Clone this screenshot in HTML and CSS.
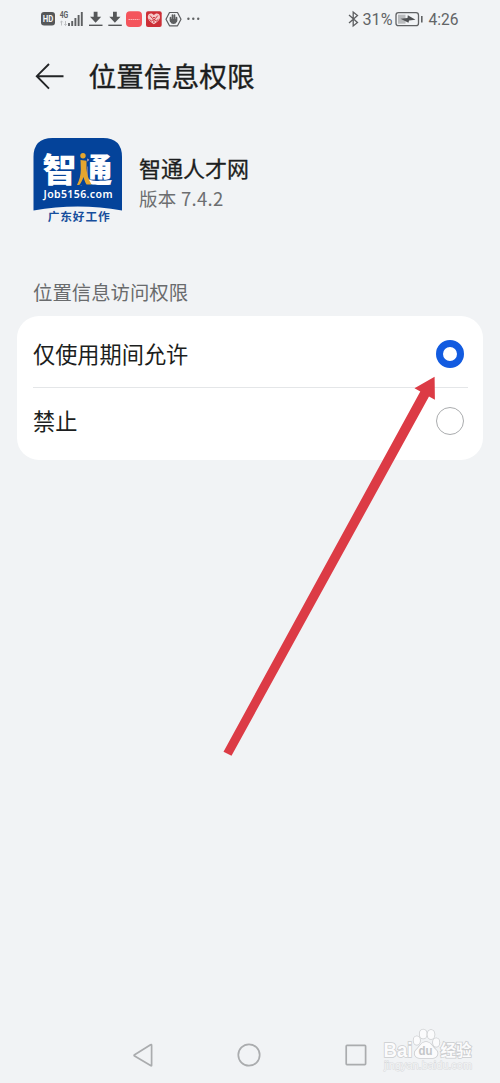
FILE: index.html
```html
<!DOCTYPE html>
<html lang="zh-CN">
<head>
<meta charset="utf-8">
<title>位置信息权限</title>
<link rel="stylesheet" href="styles.css">
</head>
<body>
<div class="screen">
  <header class="status">
    <svg class="status-left" width="162" height="20" viewBox="40 9 162 20">
      <rect x="41" y="12" width="14" height="13.500" rx="3" fill="#555759"/>
      <text class="hd" x="42.700" y="22.300" textLength="10.600" lengthAdjust="spacingAndGlyphs">HD</text>
      <text class="net" x="59.700" y="18.300" textLength="8.600" lengthAdjust="spacingAndGlyphs">4G</text>
      <path d="M61.500 21v4.500M60.200 22.300l1.300-1.300 1.300 1.300M65.500 21v4.500M64.200 24.200l1.300 1.300 1.300-1.300" fill="none" stroke="#b9bbbd" stroke-width=".9"/>
      <path d="M69 23v3M72.200 21v5M75.400 18v8M78.600 15v11M81.800 12v14" stroke="#5e6062" stroke-width="1.900"/>
      <g id="dl" fill="#555759">
        <path d="M93.700 11.700h3.800v5h3.700L95.600 22.700 90 16.700h3.700z"/>
        <path d="M89 24.600h13.500v1.400H89z"/>
      </g>
      <use href="#dl" x="19.300"/>
      <rect x="126" y="11.300" width="16" height="15.700" rx="4" fill="#f4545c"/>
      <path d="M128.500 19.500h11" stroke="#fbb0b3" stroke-dasharray="1.500 .5" stroke-width="1"/>
      <rect x="146" y="11.300" width="15.700" height="15.700" rx="2" fill="#cc2f37"/>
      <path d="M153.900 24.200c-3-2-6.100-4.200-6.100-7.200 0-3.700 4.300-4.500 6.100-1.700 1.800-2.800 6.100-2 6.100 1.700 0 3-3.100 5.200-6.100 7.200z" fill="#f5c9c9"/>
      <path d="M150 15.500l2.500 3 1.400-1.500 1.400 1.500 2.500-3M149.500 19.500l2 1.500 2.400-2 2.400 2 2-1.500M153.900 20v3" fill="none" stroke="#cc2f37" stroke-width="1"/>
      <path d="M169.500 12.500h8l3.500 6.700-3.500 6.600h-8l-3.500-6.600z" fill="none" stroke="#5c5e60" stroke-width="1.200" stroke-linejoin="round"/>
      <path d="M170.500 17.700v3M172.500 15v5M174.500 15v5M176.500 17.700v3" stroke="#5c5e60" stroke-width="1.700" stroke-linecap="round"/>
      <path d="M170 19h7v2.500q-1 2.500-3.500 2.500T170 21.500z" fill="#5c5e60"/>
      <g fill="#606264"><circle cx="188.400" cy="18.700" r="1.200"/><circle cx="193.300" cy="18.700" r="1.200"/><circle cx="198.200" cy="18.700" r="1.200"/></g>
    </svg>
    <svg class="status-right" width="116" height="20" viewBox="346 9 116 20">
      <path d="M349 15l8.500 7.500-4.300 3.500V12l4.300 3.500L349 23" fill="none" stroke="#5c5e60" stroke-width="1.300"/>
      <text class="stat" x="362.500" y="25" textLength="30" lengthAdjust="spacingAndGlyphs">31%</text>
      <rect x="396" y="12.700" width="22.500" height="13" rx="2.500" fill="none" stroke="#606264" stroke-width="1.300"/>
      <rect x="398" y="14.700" width="7.500" height="9" fill="#b9bbbd"/>
      <path d="M421.800 16v6.500" stroke="#606264" stroke-width="1.600"/>
      <path d="M400.500 18.700l7-.8.300-2.600 7.700 4.400-6.500.7-.5 2.300z" fill="#505254"/>
      <text class="stat" x="428.500" y="25" textLength="30" lengthAdjust="spacingAndGlyphs">4:26</text>
    </svg>
  </header>

  <div class="titlebar">
    <svg width="30" height="28" viewBox="35 62 30 28"><path d="M63.500 76.200H37M49 64L36.800 76.200 49 88.600" fill="none" stroke="#222426" stroke-width="1.900"/></svg>
    <h1 class="title">位置信息权限</h1>
  </div>

  <section class="app">
    <svg class="app-icon" width="90" height="90" viewBox="33 137 90 90">
      <path d="M33.500 210.500V157q0-19 19-19H103q19 0 19 19v53.500Q78 202.500 33.500 210.500z" fill="#04439a"/>
      <text class="logo" x="42.500" y="182.300" textLength="34" lengthAdjust="spacingAndGlyphs">智</text>
      <text class="logo" x="77.500" y="182.300" textLength="35" lengthAdjust="spacingAndGlyphs">通</text>
      <path d="M77 151h10.500v28.500l-1.500 6h-9z" fill="#04439a"/>
      <circle cx="83" cy="155.800" r="2.700" fill="#e5a62f"/>
      <path d="M80.500 160l6 .7v7.500c.3 5.500 1.800 11 5 16.300h-5c-1.500-2.500-2.300-5-3-7.500-1.200 3.500-2.500 6-4.300 8H77c2.500-5 3.800-9.800 3.800-15.500z" fill="#e5a62f"/>
      <text class="site" x="43.500" y="198" textLength="69" lengthAdjust="spacing">Job5156.com</text>
      <text class="slogan" x="47.700" y="221" textLength="62" lengthAdjust="spacing">广东好工作</text>
    </svg>
    <div class="app-text">
      <div class="app-name">智通人才网</div>
      <div class="version">版本 7.4.2</div>
    </div>
  </section>

  <h2 class="label">位置信息访问权限</h2>
  <div class="card">
    <div class="row"><span>仅使用期间允许</span><i class="radio radio-on"></i></div>
    <div class="row row-last"><span>禁止</span><i class="radio"></i></div>
  </div>

  <svg class="arrow" width="220" height="385" viewBox="220 373 220 385"><path d="M223.500 751.700L420.300 391.400 414.500 388.300 434.600 376.700 434.900 399.800 429 396.500 231.500 755.700z" fill="#dc3b45"/></svg>

  <nav class="nav">
    <svg width="21" height="24" viewBox="132 1043 21 24"><path d="M151.600 1045.200v20q0 1-1 .4l-16-9.600q-1-.6 0-1.200l16-10q1-.6 1 .4z" fill="none" stroke="#aaacae" stroke-width="1.700"/></svg>
    <svg width="24" height="24"><circle cx="12" cy="12" r="10.700" fill="none" stroke="#aaacae" stroke-width="1.700"/></svg>
    <svg width="22" height="24"><rect x="1.200" y="2.400" width="19.400" height="19.200" rx=".8" fill="none" stroke="#aaacae" stroke-width="1.700"/></svg>
  </nav>

  <svg class="watermark" width="96" height="48" viewBox="380 1026 96 48">
    <g class="outline">
      <text class="brand" x="383.500" y="1056.500" textLength="29" lengthAdjust="spacingAndGlyphs">Bai</text>
      <ellipse cx="416.800" cy="1040.500" rx="3.200" ry="4.200"/>
      <ellipse cx="423.200" cy="1034" rx="3.500" ry="4.500"/>
      <ellipse cx="431" cy="1034.500" rx="3.500" ry="4.500"/>
      <ellipse cx="436.200" cy="1042.500" rx="3.200" ry="4.200"/>
      <path d="M426 1042c5 0 6 4.500 9.500 7.500 4 3.500 1.500 8.500-3 8.500h-12.500c-5 0-7.200-5-3.300-8.500 3.300-3 4.300-7.500 9.300-7.500z"/>
      <text class="cn" x="440.500" y="1055.500" textLength="31" lengthAdjust="spacingAndGlyphs">经验</text>
    </g>
    <text class="du" x="418.500" y="1055" textLength="14" lengthAdjust="spacingAndGlyphs">du</text>
    <text class="url" x="384" y="1069" textLength="88" lengthAdjust="spacingAndGlyphs">jingyan.baidu.com</text>
  </svg>
</div>
</body>
</html>
```

FILE: styles.css
```css
* { box-sizing: border-box; }
body {
  margin: 0;
  background: #f1f3f5;
  font-family: "Noto Sans CJK SC", sans-serif;
  color: #1c1e20;
}
svg { display: block; flex: none; }
.screen {
  position: relative;
  display: flex;
  flex-direction: column;
  width: 500px;
  height: 1083px;
  overflow: hidden;
}
.status {
  display: flex;
  justify-content: space-between;
  padding: 9px 38px 0 40px;
  height: 38px;
}
.hd { font: 700 9px Roboto, sans-serif; fill: #f4f5f6; }
.net { font: 700 9px Roboto, sans-serif; fill: #5e6062; }
.stat { font: 400 16.500px Roboto, sans-serif; fill: #626466; }
.titlebar {
  display: flex;
  align-items: center;
  gap: 23.500px;
  height: 76px;
  padding-left: 35px;
}
.title {
  margin: 0;
  padding-bottom: 2px;
  font-size: 27.700px;
  line-height: 38px;
  font-weight: 400;
  -webkit-text-stroke: .35px #1c1e20;
}
.app { display: flex; gap: 16px; padding: 23px 33px 0; height: 164px; }
.app-text { padding-top: 14px; }
.app-name {
  font-size: 22px;
  line-height: 32px;
  font-weight: 400;
  -webkit-text-stroke: .3px #1c1e20;
}
.version { font-size: 18.500px; line-height: 31px; letter-spacing: .3px; color: #6c6e70; }
.logo { font: 900 33.500px "Noto Sans CJK SC", sans-serif; fill: #fff; }
.site { font: 600 10.500px "Noto Sans", sans-serif; fill: #fff; }
.slogan { font: 700 11.700px "Noto Sans CJK SC", sans-serif; fill: #174e9c; }
.label {
  margin: 0;
  height: 38px;
  padding-left: 33px;
  font-size: 19.400px;
  line-height: 27px;
  font-weight: 400;
  color: #696b6d;
}
.card {
  width: 466px;
  height: 144px;
  margin-left: 17px;
  padding: 5px 15px 5px 16px;
  background: #fff;
  border-radius: 22px;
}
.row {
  display: flex;
  align-items: center;
  justify-content: space-between;
  height: 67px;
  padding: 0 4px 0 0;
  font-size: 22.200px;
  border-bottom: 1px solid #e4e6e8;
}
.row span { padding-bottom: 2px; }
.row-last { height: 65px; border: 0; }
.radio { width: 28px; height: 28px; border: 1.500px solid #aaacae; border-radius: 50%; }
.radio-on { border: 7px solid #125be0; }
.arrow { position: absolute; left: 220px; top: 373px; }
.nav {
  display: flex;
  justify-content: space-between;
  margin-top: auto;
  padding: 0 133px 16px 132px;
}
.watermark { position: absolute; left: 380px; top: 1026px; }
.outline { fill: #fbfbfc; stroke: #cbcdcf; stroke-width: 1.600px; paint-order: stroke; }
.brand { font: 700 19.500px "Liberation Sans", sans-serif; }
.cn { font: 700 15.500px "Noto Sans CJK SC", sans-serif; }
.du { font: 700 13px "Liberation Sans", sans-serif; fill: #c4c6c8; }
.url { font: 400 11px "Liberation Sans", sans-serif; fill: #f4f5f6; stroke: #d8dadc; stroke-width: 1px; paint-order: stroke; }
```
